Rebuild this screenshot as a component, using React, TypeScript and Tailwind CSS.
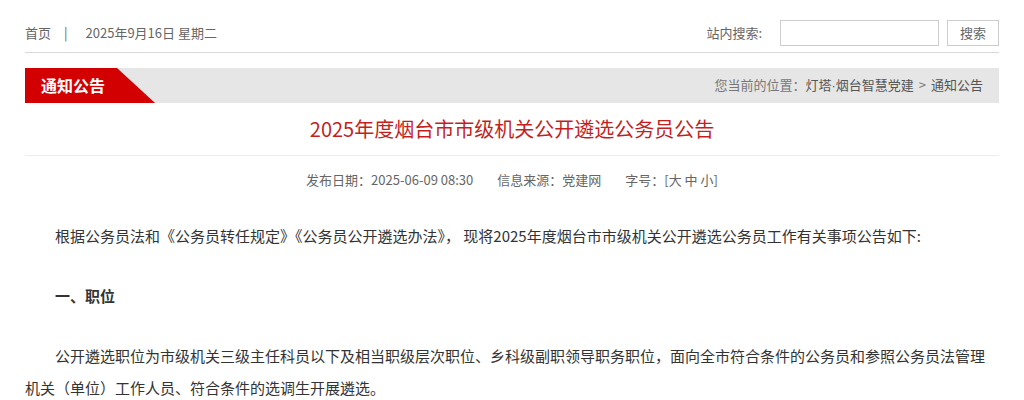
import React from 'react'

const font = { fontFamily: '"Microsoft YaHei", "Noto Sans CJK SC", "Noto Sans", sans-serif' }

export default function App() {
  return (
    <div className="w-full bg-white" style={font}>
      <div className="w-[974px] mx-auto">
        {/* top bar */}
        <div className="h-[53px] pt-[13px] flex items-center justify-between border-b border-[#d9d9d9] text-[13px] text-[#666]">
          <div className="flex items-center">
            <span>首页</span>
            <span className="ml-[13px] mr-[18px]">|</span>
            <span>2025年9月16日 星期二</span>
          </div>
          <div className="flex items-center">
            <span>站内搜索:</span>
            <input type="text" className="ml-[18px] w-[159px] h-[26px] border border-[#ccc] outline-none px-2" />
            <button className="ml-[8px] w-[52px] h-[26px] border border-[#ccc] bg-white text-[#666] text-[13px]">搜索</button>
          </div>
        </div>

        {/* channel bar */}
        <div className="mt-[15px] h-[35px] bg-[#e6e6e6] flex items-center justify-between">
          <div className="relative h-full w-[130px]">
            <svg className="absolute inset-0" width="130" height="35" viewBox="0 0 130 35">
              <polygon points="0,0 92,0 130,35 0,35" fill="#d20000" />
            </svg>
            <span className="relative pl-[16px] leading-[35px] text-[16px] font-bold text-white">通知公告</span>
          </div>
          <div className="pr-[16px] text-[13px] text-[#555]">
            <span className="text-[#777]">您当前的位置：</span>
            <span>灯塔<span className="font-['Liberation_Sans']">·</span>烟台智慧党建</span>
            <span className="mx-[5px] text-[#777]">&gt;</span>
            <span>通知公告</span>
          </div>
        </div>

        {/* title */}
        <div className="h-[53px] flex items-center justify-center border-b border-[#ececec]">
          <h1 className="text-[20px] text-[#c41f1f]">2025年度烟台市市级机关公开遴选公务员公告</h1>
        </div>

        {/* meta */}
        <div className="pt-[14px] flex justify-center gap-[24px] text-[13px] leading-[20px] text-[#666]">
          <span>发布日期：2025-06-09 08:30</span>
          <span>信息来源：党建网</span>
          <span>字号：[大 中 小]</span>
        </div>

        {/* body */}
        <div className="mt-[30px] text-[15px] leading-[32px] text-[#333]">
          <p className="indent-[30px] mb-[28px]">根据公务员法和《公务员转任规定》《公务员公开遴选办法》， 现将2025年度烟台市市级机关公开遴选公务员工作有关事项公告如下:</p>
          <p className="indent-[30px] mb-[28px] font-bold">一、职位</p>
          <p className="indent-[30px] mb-[28px]">公开遴选职位为市级机关三级主任科员以下及相当职级层次职位、乡科级副职领导职务职位，面向全市符合条件的公务员和参照公务员法管理机关（单位）工作人员、符合条件的选调生开展遴选。</p>
        </div>
      </div>
    </div>
  )
}
